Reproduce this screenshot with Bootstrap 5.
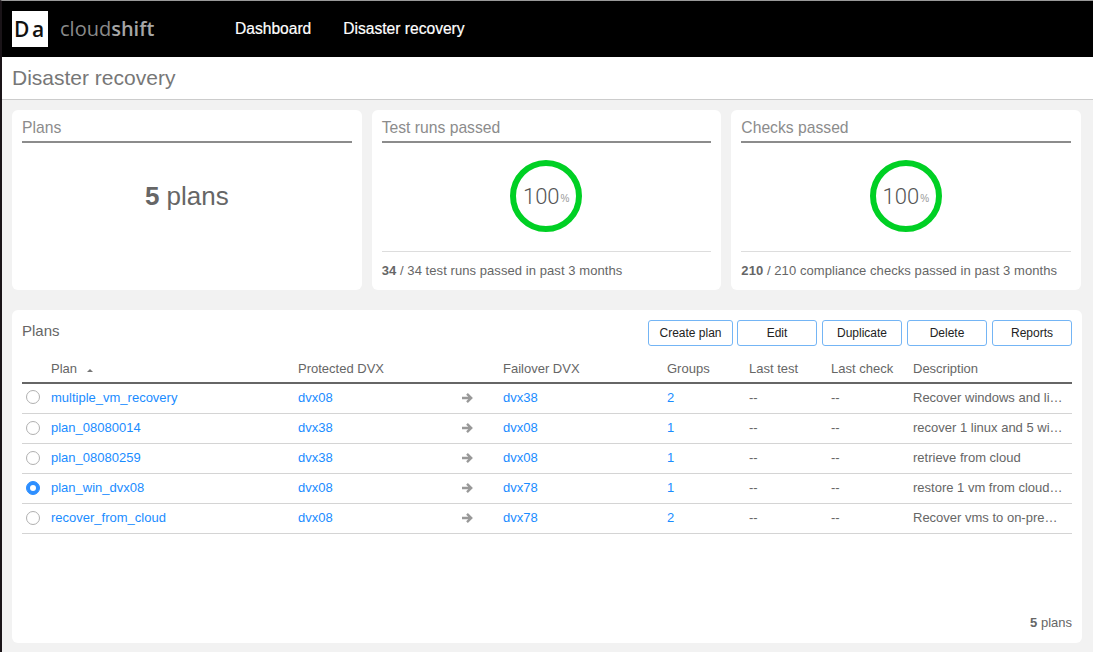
<!DOCTYPE html>
<html lang="en">
<head>
    <meta charset="UTF-8">
    <title>Disaster recovery</title>
    <link href="https://cdn.jsdelivr.net/npm/bootstrap@5.3.0/dist/css/bootstrap.min.css" rel="stylesheet">
    <style>
        html, body {
            height: 100%;
        }
        body {
            background: #f2f2f2;
            font-family: "Liberation Sans", Arial, sans-serif;
            font-size: 13px;
            color: #666;
            border-left: 2px solid #1a1418;
            border-top: 1px solid #999;
            overflow: hidden;
        }
        a {
            color: #1a8cff;
            text-decoration: none;
        }
        .top-bar {
            background: #000;
            height: 56px;
            padding: 0 0 0 10px;
        }
        .logo-box {
            width: 36px;
            height: 36px;
            background: #fff;
            color: #111;
            font-family: "Open Sans", sans-serif;
            font-size: 21px;
            font-weight: 600;
            letter-spacing: 2.5px;
            line-height: 36px;
            padding-left: 2px;
        }
        .logo-name {
            color: #8a8a8a;
            font-family: "Open Sans", sans-serif;
            font-size: 20px;
            margin-left: 12px;
            width: 175px;
        }
        .logo-name b {
            font-weight: 600;
            color: #a6a6a6;
        }
        .top-link {
            color: #fff;
            font-size: 15.6px;
            margin-right: 32px;
            -webkit-text-stroke: 0.2px #fff;
        }
        .title-bar {
            background: #fff;
            height: 43px;
            border-bottom: 1px solid #ccc;
            padding-left: 10px;
            font-size: 21px;
            line-height: 42px;
            color: #777;
        }
        .page-body {
            padding: 10px 11px 0 10px;
        }
        .stat-row {
            gap: 10px;
            margin: 0 1px 20px 0;
        }
        .stat-box {
            background: #fff;
            border-radius: 6px;
            height: 180px;
            flex: 1 1 0;
            padding: 0 10px;
        }
        .stat-title {
            font-size: 15.7px;
            color: #8c8c8c;
            height: 33px;
            line-height: 35px;
            border-bottom: 2px solid #8c8c8c;
        }
        .stat-plans {
            font-size: 26px;
            color: #666;
            height: 107px;
        }
        .stat-ring {
            height: 107px;
            padding: 0 .6px 1px 0;
        }
        .ring {
            width: 72px;
            height: 72px;
            border: 6px solid #00d024;
            border-radius: 50%;
            font-family: Roboto, sans-serif;
            font-size: 22px;
            font-weight: 300;
            color: #555;
        }
        .ring small {
            font-family: "Liberation Sans", sans-serif;
            font-size: 10px;
            color: #999;
            margin: 5px 0 0 1px;
        }
        .stat-foot {
            border-top: 1px solid #ddd;
            margin-top: 1px;
            padding-top: 10px;
            line-height: 18px;
            letter-spacing: .07px;
        }
        .plans-panel {
            background: #fff;
            border-radius: 6px;
            height: 333px;
            padding: 10px 10px 0;
        }
        .panel-title {
            font-size: 15px;
            color: #666;
            line-height: 21px;
        }
        .act-btn {
            width: 80px;
            height: 26px;
            padding: 0;
            font-size: 12px;
            color: #222;
            background: #fff;
            border: 1px solid #74b5f5;
            border-radius: 3px;
        }
        .act-btn.first-btn {
            width: 85px;
            margin-right: -1px;
        }
        .btn-gap {
            gap: 5px;
        }
        .plan-table {
            table-layout: fixed;
            width: 1050px;
            margin: 10px 0 0;
            font-size: 13px;
        }
        .plan-table th, .plan-table td {
            padding: 0;
            color: #666;
            font-weight: 400;
            white-space: nowrap;
            overflow: hidden;
            text-overflow: ellipsis;
            vertical-align: middle;
            box-shadow: none;
        }
        .plan-table th {
            height: 27px;
            padding-bottom: 1px;
            border-bottom: 2px solid #666;
        }
        .plan-table td {
            height: 30px;
            border-bottom: 1px solid #d4d4d4;
        }
        .plan-table tbody tr:first-child td {
            padding-bottom: 1px;
        }
        .plan-table td:last-child {
            padding-right: 6px;
        }
        .plan-table td a {
            color: #1a8cff;
        }
        .plan-table td svg {
            display: block;
        }
        .plan-table .form-check-input {
            width: 14px;
            height: 14px;
            margin: 0 0 1px 4px;
            border: 1.5px solid #b0b0b0;
            float: none;
            display: block;
        }
        .plan-table .form-check-input:checked {
            background-color: #2e8fff;
            border-color: #2e8fff;
        }
        .sort-up {
            display: inline-block;
            margin-left: 6px;
            vertical-align: 1px;
            border: 3px solid transparent;
            border-top: 0;
            border-bottom: 3px solid #777;
        }
        .plan-count {
            height: 90px;
            padding: 79px 0 0;
            text-align: right;
        }
        .plan-count b {
            font-weight: 700;
        }
    </style>
</head>
<body>

<div class="top-bar d-flex align-items-center">
    <div class="logo-box">Da</div>
    <div class="logo-name">cloud<b>shift</b></div>
    <a class="top-link" href="#">Dashboard</a>
    <a class="top-link" href="#">Disaster recovery</a>
</div>

<div class="title-bar">Disaster recovery</div>

<div class="page-body">
    <div class="d-flex stat-row">
        <div class="stat-box">
            <div class="stat-title">Plans</div>
            <div class="stat-plans d-flex align-items-center justify-content-center"><span><b>5</b> plans</span></div>
        </div>
        <div class="stat-box">
            <div class="stat-title">Test runs passed</div>
            <div class="stat-ring d-flex align-items-center justify-content-center">
                <div class="ring d-flex align-items-center justify-content-center">100<small>%</small></div>
            </div>
            <div class="stat-foot"><b>34</b> / 34 test runs passed in past 3 months</div>
        </div>
        <div class="stat-box">
            <div class="stat-title">Checks passed</div>
            <div class="stat-ring d-flex align-items-center justify-content-center">
                <div class="ring d-flex align-items-center justify-content-center">100<small>%</small></div>
            </div>
            <div class="stat-foot"><b>210</b> / 210 compliance checks passed in past 3 months</div>
        </div>
    </div>

    <div class="plans-panel">
        <div class="d-flex justify-content-between align-items-start">
            <div class="panel-title">Plans</div>
            <div class="d-flex btn-gap">
                <button type="button" class="btn act-btn first-btn">Create plan</button>
                <button type="button" class="btn act-btn">Edit</button>
                <button type="button" class="btn act-btn">Duplicate</button>
                <button type="button" class="btn act-btn">Delete</button>
                <button type="button" class="btn act-btn">Reports</button>
            </div>
        </div>

        <table class="table plan-table">
            <colgroup>
                <col style="width:29px"><col style="width:247px"><col style="width:163px"><col style="width:42px"><col style="width:164px"><col style="width:82px"><col style="width:82px"><col style="width:82px"><col style="width:159px">
            </colgroup>
            <thead>
                <tr>
                    <th></th>
                    <th>Plan <span class="sort-up"></span></th>
                    <th>Protected DVX</th>
                    <th></th>
                    <th>Failover DVX</th>
                    <th>Groups</th>
                    <th>Last test</th>
                    <th>Last check</th>
                    <th>Description</th>
                </tr>
            </thead>
            <tbody id="planRows"></tbody>
        </table>

        <div class="plan-count"><b>5</b> plans</div>
    </div>
</div>

<script src="https://cdn.jsdelivr.net/npm/bootstrap@5.3.0/dist/js/bootstrap.bundle.min.js"></script>

<script>
    const plans = [
        ["multiple_vm_recovery", "dvx08", "dvx38", 2, "Recover windows and linux vms"],
        ["plan_08080014", "dvx38", "dvx08", 1, "recover 1 linux and 5 windows"],
        ["plan_08080259", "dvx38", "dvx08", 1, "retrieve from cloud"],
        ["plan_win_dvx08", "dvx08", "dvx78", 1, "restore 1 vm from cloud\u00a0to site"],
        ["recover_from_cloud", "dvx08", "dvx78", 2, "Recover vms to on-premises"]
    ];
    const arrow = '<svg width="12" height="12" viewBox="0 0 12 12"><path d="M1 6h9M6 1.8l4.2 4.2-4.2 4.2" fill="none" stroke="#999" stroke-width="2.4"/></svg>';

    document.getElementById("planRows").innerHTML = plans.map((p, i) => `
        <tr>
            <td><input class="form-check-input" type="radio" name="plan" ${i === 3 ? "checked" : ""}></td>
            <td><a href="#">${p[0]}</a></td>
            <td><a href="#">${p[1]}</a></td>
            <td>${arrow}</td>
            <td><a href="#">${p[2]}</a></td>
            <td><a href="#">${p[3]}</a></td>
            <td>--</td>
            <td>--</td>
            <td>${p[4]}</td>
        </tr>`).join("");
</script>

</body>
</html>
